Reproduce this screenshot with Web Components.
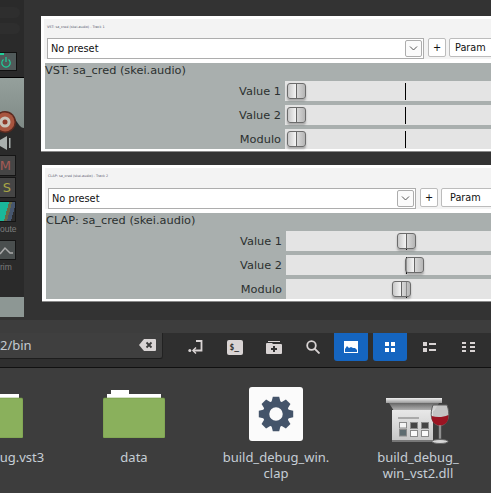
<!DOCTYPE html>
<html>
<head>
<meta charset="utf-8">
<style>
  html, body { margin: 0; padding: 0; background: #333; }
  body { width: 491px; height: 493px; overflow: hidden; font-family: "DejaVu Sans", sans-serif; }
</style>
</head>
<body>
<desk-top>
  <daw-strip></daw-strip>
  <plugin-window style="left:41px;top:16px" caption="VST: sa_cred (skei.audio) - Track 1" name="VST: sa_cred (skei.audio)">
    <plugin-param knob="287" line="405">Value 1</plugin-param>
    <plugin-param knob="287" line="405">Value 2</plugin-param>
    <plugin-param knob="287" line="405">Modulo</plugin-param>
  </plugin-window>
  <plugin-window style="left:42px;top:165px" caption="CLAP: sa_cred (skei.audio) - Track 2" name="CLAP: sa_cred (skei.audio)" combo="true">
    <plugin-param knob="397" line="406">Value 1</plugin-param>
    <plugin-param knob="405" line="406">Value 2</plugin-param>
    <plugin-param knob="392" line="406">Modulo</plugin-param>
  </plugin-window>
</desk-top>
<file-manager>
  <file-item>
    <svg slot="icon" width="62" height="48" viewBox="0 0 62 48"><path d="M8 0h18v4H8zM4 4h54v5H4z" fill="#fff"/><rect y="8" width="62" height="40" rx="1.5" fill="#8ab05c" stroke="#6f9445" stroke-width=".6"/></svg>
    build_debug.vst3
  </file-item>
  <file-item>
    <svg slot="icon" width="62" height="48" viewBox="0 0 62 48"><path d="M8 0h18v4H8zM4 4h54v5H4z" fill="#fff"/><rect y="8" width="62" height="40" rx="1.5" fill="#8ab05c" stroke="#6f9445" stroke-width=".6"/></svg>
    data
  </file-item>
  <file-item>
    <svg slot="icon" width="54" height="54" viewBox="0 0 54 54" style="position:relative;top:-3px">
      <rect width="54" height="54" rx="3" fill="#fbfbfb"/>
      <g fill="#44546a" transform="translate(27 27)">
        <circle r="10" fill="none" stroke="#44546a" stroke-width="6.500"/>
        <path id="tooth" d="M-3.200 -17.200h6.400l1.600 6.500h-9.600z"/>
        <path d="M-3.200 -17.200h6.400l1.600 6.500h-9.600z" transform="rotate(45)"/>
        <path d="M-3.200 -17.200h6.400l1.600 6.500h-9.600z" transform="rotate(90)"/>
        <path d="M-3.200 -17.200h6.400l1.600 6.500h-9.600z" transform="rotate(135)"/>
        <path d="M-3.200 -17.200h6.400l1.600 6.500h-9.600z" transform="rotate(180)"/>
        <path d="M-3.200 -17.200h6.400l1.600 6.500h-9.600z" transform="rotate(225)"/>
        <path d="M-3.200 -17.200h6.400l1.600 6.500h-9.600z" transform="rotate(270)"/>
        <path d="M-3.200 -17.200h6.400l1.600 6.500h-9.600z" transform="rotate(315)"/>
      </g>
    </svg>
    build_debug_win.<br>clap
  </file-item>
  <file-item>
    <!-- viewBox is in page coordinates so it can be checked against the reference -->
    <svg slot="icon" width="66" height="58" viewBox="385 390 66 58">
      <defs>
        <linearGradient id="lid" x1="0" y1="0" x2="0" y2="1"><stop offset="0" stop-color="#f0f0f0"/><stop offset="1" stop-color="#9a9a9a"/></linearGradient>
        <linearGradient id="hinge" x1="0" y1="0" x2="0" y2="1"><stop offset="0" stop-color="#666"/><stop offset="1" stop-color="#bbb"/></linearGradient>
        <linearGradient id="case" x1="0" y1="0" x2="0" y2="1"><stop offset="0" stop-color="#e8e8e8"/><stop offset="1" stop-color="#c6c6c6"/></linearGradient>
      </defs>
      <rect x="386" y="398" width="56" height="5" fill="url(#lid)"/>
      <path d="M389 403h50l-5 8h-40z" fill="url(#hinge)"/>
      <rect x="392" y="410" width="41" height="31" fill="url(#case)"/>
      <rect x="392" y="440" width="41" height="2" fill="#777"/>
      <rect x="398" y="417" width="21" height="2" fill="#aaa"/>
      <g stroke="#8a8a8a" stroke-width="1">
        <rect x="399.500" y="422.500" width="7" height="5.500" fill="#f4f4f4"/>
        <rect x="399.500" y="429.500" width="7" height="6.500" fill="#5e6c70"/>
        <rect x="410.500" y="422.500" width="7" height="6" fill="#454545"/>
        <rect x="410.500" y="430.500" width="7" height="6" fill="#fafafa"/>
        <rect x="421.500" y="422.500" width="7" height="6" fill="#454545"/>
        <rect x="421.500" y="430.500" width="7" height="6" fill="#fafafa"/>
      </g>
      <path d="M433 405c-3 8-3 18 6 21v13h2v-13c9-3 9-13 6-21z" fill="#dcdcdc" fill-opacity=".85" stroke="#5c5c5c" stroke-width="1"/>
      <path d="M431.700 416c5 1.500 11 1.500 16.600-1 .6 6-2 10-8.300 10.600-6-.6-8.800-4.600-8.300-9.600z" fill="#9b1422"/>
      <ellipse cx="440" cy="441.500" rx="8" ry="2" fill="#d6d6d6" stroke="#666" stroke-width="1"/>
    </svg>
    build_debug_<br>win_vst2.dll
  </file-item>
</file-manager>

<script>
// left track strip, cut off by the window edge
class DawStrip extends HTMLElement {
  constructor() {
    super();
    this.attachShadow({ mode: "open" });
    this.shadowRoot.innerHTML = `
      <style>
        :host { position: absolute; left: 0; top: 0; width: 24px; height: 317px; background: #2a2a2a; overflow: hidden; display: block; font-family: "DejaVu Sans", sans-serif; }
        .pill { height: 11px; width: 20px; background: #2e2e2e; border-radius: 0 6px 6px 0; margin-bottom: 5px; }
        .pill:first-of-type { margin-top: 7px; }
        .power { width: 16px; height: 17px; margin-top: 18px; background: #505a5a; border: 1px solid #111; border-left: 0; position: relative; }
        .power i { position: absolute; left: 0; top: 0; width: 4px; height: 2px; background: #1fd19a; }
        .power svg { position: absolute; left: 0; top: 3px; }
        .panel { display: block; margin-top: 6px; }
        .btn { width: 15px; height: 19px; background: #454545; border: 1px solid #151515; border-left: 0; display: flex; align-items: center; justify-content: flex-end; font-size: 13px; overflow: hidden; }
        .btn span { margin-right: 4px; }
        .m { color: #a55a55; margin-top: 2px; }
        .s { color: #a9a545; margin-top: 1px; }
        .route { margin-top: 3px; background: linear-gradient(105deg, #1ab89a 0 45%, #6a6a48 45% 60%, #46566e 60% 80%, #2c2c2c 80%); }
        .cap { font-family: "Liberation Sans", sans-serif; font-size: 8.500px; color: #7d7d7d; height: 14px; line-height: 14px; white-space: nowrap; }
        .trim { margin-top: 4px; height: 18px; background: #4a4f4f; }
        .tail { height: 20px; background: #8d9794; position: absolute; left: 0; right: 0; bottom: 0; }
      </style>
      <div class="pill"></div><div class="pill"></div>
      <div class="power"><i></i>
        <svg width="12" height="12" viewBox="0 0 12 12" fill="none" stroke="#1fd19a" stroke-width="1.200"><path d="M3.500 3.500a4.200 4.200 0 1 0 5 0M6 1v5"/></svg>
      </div>
      <svg class="panel" width="24" height="76" viewBox="0 0 24 76">
        <defs><linearGradient id="p" x1="0" y1="0" x2="0" y2="1"><stop offset="0" stop-color="#95a09c"/><stop offset="1" stop-color="#7f8a86"/></linearGradient></defs>
        <rect width="24" height="1" fill="#000"/>
        <path d="M0 1h24v50c-6 0-8-13-18-16H0z" fill="url(#p)"/>
        <circle cx="5" cy="45" r="11" fill="#5a2a20"/>
        <circle cx="5" cy="45" r="9.500" fill="#a8553f"/>
        <circle cx="5" cy="45" r="5.500" fill="#c9c2b8"/>
        <circle cx="5" cy="45" r="2.500" fill="#8f3a2a"/>
        <path d="M0 63l7-4v14l-7-4z" fill="#aab0ae"/><rect x="9" y="61" width="1.500" height="10" fill="#aab0ae"/>
      </svg>
      <div class="btn m"><span>M</span></div>
      <div class="btn s"><span>S</span></div>
      <div class="btn route"></div>
      <div class="cap">oute</div>
      <div class="btn trim">
        <svg width="15" height="18" viewBox="0 0 15 18" fill="none" stroke="#aaa" stroke-width="1.500"><path d="M0 13l5-6 5 5h3"/></svg>
      </div>
      <div class="cap">rim</div>
      <div class="tail"></div>`;
  }
}
customElements.define("daw-strip", DawStrip);

class DeskTop extends HTMLElement {
  constructor() {
    super();
    this.attachShadow({ mode: "open" });
    this.shadowRoot.innerHTML = `
      <style>:host { display: block; position: relative; height: 320px; background: #333; overflow: hidden; }</style>
      <slot></slot>`;
  }
}
customElements.define("desk-top", DeskTop);

class PluginWindow extends HTMLElement {
  constructor() {
    super();
    this.attachShadow({ mode: "open" });
  }
  connectedCallback() {
    const clap = this.getAttribute("combo") === "true";
    const comboWidth = clap ? 368 : 377;
    this.shadowRoot.innerHTML = `
      <style>
        :host { display: block; position: absolute; width: 470px; background: #fff; box-sizing: border-box; padding: 3px 0 2px 3px; border-bottom: 1px solid #8a8a8a; color: #2b2f2f; }
        .title { height: ${clap ? 20 : 19}px; background: #f3f3f3; font-size: 3.400px; color: #55556a; padding-left: 3px; line-height: 17px; white-space: nowrap; }
        .bar { background: #f3f3f3; display: flex; height: 21px; padding-left: 3px; gap: 4px; align-items: stretch; }
        .combo { width: ${comboWidth}px; box-sizing: border-box; background: #fff; border: 1px solid #adadad; font-size: 9.800px; color: #111; line-height: 19px; padding-left: 3px; position: relative; }
        .arrow { position: absolute; right: 1px; top: 1px; width: 15px; height: 15px; border: 1px solid #adadad; border-radius: 2px; display: flex; align-items: center; justify-content: center; background: #fbfbfb; }
        .btn { box-sizing: border-box; height: 19px; background: #fff; border: 1px solid #bcbcbc; border-radius: 2px; font-size: 9.700px; color: #111; line-height: 17px; text-align: center; }
        .param { width: 60px; margin-left: -1px; text-align: left; padding-left: ${clap ? 8 : 5}px; }
        .gap { height: 4px; background: #fff; }
        .panel { margin-left: 1px; background: #a9afae; height: 86px; display: flex; flex-direction: column; justify-content: flex-end; gap: 4px; position: relative; }
        .name { position: absolute; left: 0; top: 0; font-size: 11.340px; line-height: 15px; white-space: nowrap; }
      </style>
      <div class="title">${this.getAttribute("caption")}</div>
      <div class="bar">
        <div class="combo">No preset
          <div class="arrow"><svg width="9" height="5" viewBox="0 0 9 5" fill="none" stroke="#555"><path d="M1 .5l3.500 3.500L8 .5"/></svg></div>
        </div>
        <div class="btn" style="width:18px">+</div>
        <div class="btn param">Param</div>
      </div>
      <div class="gap"></div>
      <div class="panel">
        <div class="name">${this.getAttribute("name")}</div>
        <slot></slot>
      </div>`;
  }
}
customElements.define("plugin-window", PluginWindow);

class PluginParam extends HTMLElement {
  constructor() {
    super();
    this.attachShadow({ mode: "open" });
  }
  connectedCallback() {
    // knob and line attributes are page x, the track starts 240px into the row
    const clap = this.parentElement.getAttribute("combo") === "true";
    const origin = clap ? 286 : 285;
    const knob = this.getAttribute("knob") - origin;
    const line = this.getAttribute("line") - origin;
    this.shadowRoot.innerHTML = `
      <style>
        :host { display: flex; height: 20px; font-size: 11.340px; color: #2b2f2f; }
        .label { width: 240px; text-align: right; padding-right: 4px; box-sizing: border-box; line-height: 21px; white-space: nowrap; }
        .track { flex: 1; background: #e4e4e4; position: relative; }
        .line { position: absolute; left: ${line}px; top: 2px; width: 1px; height: 17px; background: #000; }
        .knob { position: absolute; left: ${knob}px; top: 2px; width: 19px; height: 16px; box-sizing: border-box; border: 1px solid #6c6c6c; border-radius: 3px; box-shadow: 0 2px 2px rgba(60,60,60,.35);
                background: linear-gradient(90deg, rgba(190,190,190,.75) 0, rgba(255,255,255,.75) 50%, rgba(215,215,215,.75) 50%, rgba(165,165,165,.75) 100%); }
        .knob::after { content: ""; position: absolute; left: 8px; top: 0; bottom: 0; width: 1px; background: #666; }
      </style>
      <div class="label"><slot></slot></div>
      <div class="track"><div class="line"></div><div class="knob"></div></div>`;
  }
}
customElements.define("plugin-param", PluginParam);

class ToolButton extends HTMLElement {
  constructor() {
    super();
    this.attachShadow({ mode: "open" });
    this.shadowRoot.innerHTML = `
      <style>
        :host { display: flex; width: 34px; height: 28px; align-items: center; justify-content: center; border-radius: 0 0 3px 3px; }
        :host([active]) { background: #1565c0; }
      </style>
      <slot></slot>`;
  }
}
customElements.define("tool-button", ToolButton);

class FileManager extends HTMLElement {
  constructor() {
    super();
    this.attachShadow({ mode: "open" });
    this.shadowRoot.innerHTML = `
      <style>
        :host { display: block; background: #3d3d3d; height: 173px; overflow: hidden; font-family: "Noto Sans", sans-serif; }
        .toolbar { margin-top: 13px; height: 34px; background: #2f2f2f; border-bottom: 1px solid #111; display: flex; }
        .path { width: 163px; height: 26px; box-sizing: border-box; background: #3f3f3f; border-bottom: 1px solid #1d1d1d; border-right: 1px solid #222; border-radius: 0 0 3px 0; color: #c4cbd2; font-size: 13px; line-height: 24px; position: relative; white-space: nowrap; }
        .path svg { position: absolute; left: 139px; top: 5px; }
        .tools { display: flex; padding-left: 13px; }
        .tools tool-button { width: 39px; }
        .tools tool-button[active] { width: 34px; margin-right: 5px; }
        .icons { display: flex; margin-left: -79px; margin-top: 22px; }
      </style>
      <div class="toolbar">
        <div class="path">2/bin
          <svg width="17" height="14" viewBox="0 0 17 14"><path d="M5 1h11a1 1 0 0 1 1 1v10a1 1 0 0 1-1 1H5L0 7z" fill="#d9d4d4"/><path d="M7.500 4.500l5 5m0-5l-5 5" stroke="#3a3a3a" stroke-width="1.800"/></svg>
        </div>
        <div class="tools">
          <tool-button><svg width="15" height="14" viewBox="0 0 15 14" fill="none" stroke="#d9d4d4" stroke-width="1.800"><path d="M8 1h5.500v9.500H5"/><path d="M8 7.500l-3 3 3 3" stroke-width="1.500"/><circle cx="1.800" cy="10.500" r="1.500" fill="#d9d4d4" stroke="none"/></svg></tool-button>
          <tool-button><svg width="16" height="15" viewBox="0 0 16 15"><rect width="16" height="15" rx="2" fill="#d9d4d4"/><text x="2.500" y="10" font-size="8" font-weight="700" font-family="DejaVu Sans Mono" fill="#333">$_</text></svg></tool-button>
          <tool-button><svg width="16" height="13" viewBox="0 0 16 13"><path d="M2 0h12v1H2z" fill="#d9d4d4"/><path d="M1 2h5l1 1h8a1 1 0 0 1 1 1v8a1 1 0 0 1-1 1H1a1 1 0 0 1-1-1V3a1 1 0 0 1 1-1z" fill="#d9d4d4"/><path d="M8 5v6M5 8h6" stroke="#333" stroke-width="2"/></svg></tool-button>
          <tool-button style="margin-right:2px"><svg width="14" height="14" viewBox="0 0 14 14" fill="none" stroke="#d9d4d4" stroke-width="1.800"><circle cx="5.500" cy="5.500" r="4.300"/><path d="M8.500 8.500l5 5"/></svg></tool-button>
          <tool-button active><svg width="14" height="12" viewBox="0 0 14 12"><rect width="14" height="12" fill="#fff"/><path d="M1 11V8l2-3 2 2 2-1 2 1 2 0 2 2v2z" fill="#1565c0"/></svg></tool-button>
          <tool-button active><svg width="10" height="10" viewBox="0 0 10 10" fill="#fff"><path d="M0 0h4v4H0zM6 0h4v4H6zM0 6h4v4H0zM6 6h4v4H6z"/></svg></tool-button>
          <tool-button style="margin-left:-2px"><svg width="13" height="10" viewBox="0 0 13 10" fill="#d9d4d4"><path d="M0 0h4v4H0zM0 6h4v4H0zM6 1h7v2H6zM6 7h7v2H6z"/></svg></tool-button>
          <tool-button><svg width="13" height="10" viewBox="0 0 13 10" fill="#d9d4d4"><path d="M0 0h4v2H0zM0 4h4v2H0zM0 8h4v2H0zM8 0h5v2H8zM8 4h5v2H8zM8 8h5v2H8z"/></svg></tool-button>
        </div>
      </div>
      <div class="icons"><slot></slot></div>`;
  }
}
customElements.define("file-manager", FileManager);

class FileItem extends HTMLElement {
  constructor() {
    super();
    this.attachShadow({ mode: "open" });
    this.shadowRoot.innerHTML = `
      <style>
        :host { display: block; width: 142px; flex: none; text-align: center; color: #c6ced6; font-size: 13px; line-height: 16px; }
        .icon { height: 48px; display: flex; justify-content: center; align-items: flex-start; margin-bottom: 11px; }
      </style>
      <div class="icon"><slot name="icon"></slot></div>
      <slot></slot>`;
  }
}
customElements.define("file-item", FileItem);
</script>
</body>
</html>
